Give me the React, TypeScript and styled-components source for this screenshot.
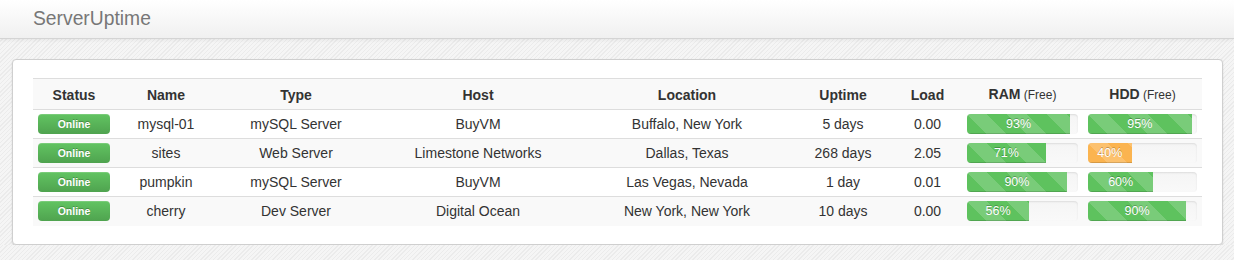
import React from 'react'
import styled, { createGlobalStyle } from 'styled-components'

const GlobalStyle = createGlobalStyle`
  *, *::before, *::after {
    box-sizing: border-box;
  }
  html, body {
    margin: 0;
    padding: 0;
  }
  body {
    font-family: "Liberation Sans", Arial, Helvetica, sans-serif;
    font-size: 14px;
    line-height: 20px;
    color: #333;
    background-color: #f1f1f1;
    background-image: repeating-linear-gradient(
      -45deg,
      #f5f5f5 0px,
      #f5f5f5 2px,
      #ebebeb 2px,
      #ebebeb 3px
    );
  }
`

const Navbar = styled.div`
  height: 39px;
  padding-left: 33px;
  background-image: linear-gradient(to bottom, #ffffff, #f0f0f0);
  border-bottom: 1px solid #d4d4d4;
  box-shadow: 0 1px 4px rgba(0, 0, 0, 0.065);
`

const Brand = styled.a`
  display: inline-block;
  font-size: 19.3px;
  line-height: 38px;
  color: #777;
  text-decoration: none;
`

const Panel = styled.div`
  margin: 20px 11px 0 12px;
  padding: 18px 20px;
  background: #fff;
  border: 1px solid #cfcfcf;
  border-radius: 4px;
  box-shadow: 0 1px 2px rgba(0, 0, 0, 0.12);
`

const Table = styled.table`
  width: 100%;
  table-layout: fixed;
  border-collapse: collapse;
  border-spacing: 0;
`

const Row = styled.tr<{ $striped?: boolean }>`
  background: ${p => (p.$striped ? '#f9f9f9' : '#fff')};
`

const HeadCell = styled.th<{ $w: number }>`
  width: ${p => p.$w}px;
  padding: 5px 5px 4px;
  border-top: 1px solid #ddd;
  font-weight: bold;
  text-align: center;
  color: #333;
`

const Small = styled.small`
  font-size: 12px;
  font-weight: normal;
`

const Cell = styled.td`
  padding: 4px 5px;
  border-top: 1px solid #ddd;
  text-align: center;
  vertical-align: middle;
  height: 29px;
  white-space: nowrap;
`

const StatusLabel = styled.span`
  display: block;
  height: 20px;
  line-height: 20px;
  border-radius: 4px;
  background-image: linear-gradient(to bottom, #62c462, #4fa34f);
  box-shadow: inset 0 1px 0 rgba(255, 255, 255, 0.15);
  color: #fff;
  font-size: 10.5px;
  font-weight: bold;
  text-shadow: 0 -1px 0 rgba(0, 0, 0, 0.25);
`

const Progress = styled.div`
  height: 20px;
  overflow: hidden;
  border-radius: 4px;
  background-image: linear-gradient(to bottom, #f5f5f5, #f9f9f9);
  box-shadow: inset 0 1px 2px rgba(0, 0, 0, 0.1);
  display: flex;
`

const Bar = styled.div<{ $tone: 'success' | 'warning' }>`
  height: 20px;
  line-height: 20px;
  font-size: 12.5px;
  color: #fff;
  text-align: center;
  text-shadow: 0 -1px 0 rgba(0, 0, 0, 0.25);
  background-color: ${p => (p.$tone === 'success' ? '#5ec25e' : '#fbb450')};
  background-image: linear-gradient(
    45deg,
    rgba(255, 255, 255, 0.17) 25%,
    transparent 25%,
    transparent 50%,
    rgba(255, 255, 255, 0.17) 50%,
    rgba(255, 255, 255, 0.17) 75%,
    transparent 75%,
    transparent
  );
  background-size: 40px 40px;
  box-shadow: inset 0 -1px 0 rgba(0, 0, 0, 0.15);
`

const columns = [
  { title: 'Status', w: 82 },
  { title: 'Name', w: 102 },
  { title: 'Type', w: 158 },
  { title: 'Host', w: 206 },
  { title: 'Location', w: 212 },
  { title: 'Uptime', w: 100 },
  { title: 'Load', w: 69 },
  { title: 'RAM', w: 121, free: true },
  { title: 'HDD', w: 119, free: true }
]

const servers = [
  { name: 'mysql-01', type: 'mySQL Server', host: 'BuyVM', location: 'Buffalo, New York', uptime: '5 days', load: '0.00', ram: 93, hdd: 95 },
  { name: 'sites', type: 'Web Server', host: 'Limestone Networks', location: 'Dallas, Texas', uptime: '268 days', load: '2.05', ram: 71, hdd: 40 },
  { name: 'pumpkin', type: 'mySQL Server', host: 'BuyVM', location: 'Las Vegas, Nevada', uptime: '1 day', load: '0.01', ram: 90, hdd: 60 },
  { name: 'cherry', type: 'Dev Server', host: 'Digital Ocean', location: 'New York, New York', uptime: '10 days', load: '0.00', ram: 56, hdd: 90 }
]

function Usage({ value }: { value: number }) {
  return (
    <Progress>
      <Bar $tone={value < 50 ? 'warning' : 'success'} style={{ width: `${value}%` }}>
        {value}%
      </Bar>
    </Progress>
  )
}

export default function App() {
  return (
    <>
      <GlobalStyle />
      <Navbar>
        <Brand href="#">ServerUptime</Brand>
      </Navbar>
      <Panel>
        <Table>
          <thead>
            <Row $striped>
              {columns.map(c => (
                <HeadCell key={c.title} $w={c.w}>
                  {c.title}
                  {c.free && <Small> (Free)</Small>}
                </HeadCell>
              ))}
            </Row>
          </thead>
          <tbody>
            {servers.map((s, i) => (
              <Row key={s.name} $striped={i % 2 === 1}>
                <Cell>
                  <StatusLabel>Online</StatusLabel>
                </Cell>
                <Cell>{s.name}</Cell>
                <Cell>{s.type}</Cell>
                <Cell>{s.host}</Cell>
                <Cell>{s.location}</Cell>
                <Cell>{s.uptime}</Cell>
                <Cell>{s.load}</Cell>
                <Cell>
                  <Usage value={s.ram} />
                </Cell>
                <Cell>
                  <Usage value={s.hdd} />
                </Cell>
              </Row>
            ))}
          </tbody>
        </Table>
      </Panel>
    </>
  )
}
